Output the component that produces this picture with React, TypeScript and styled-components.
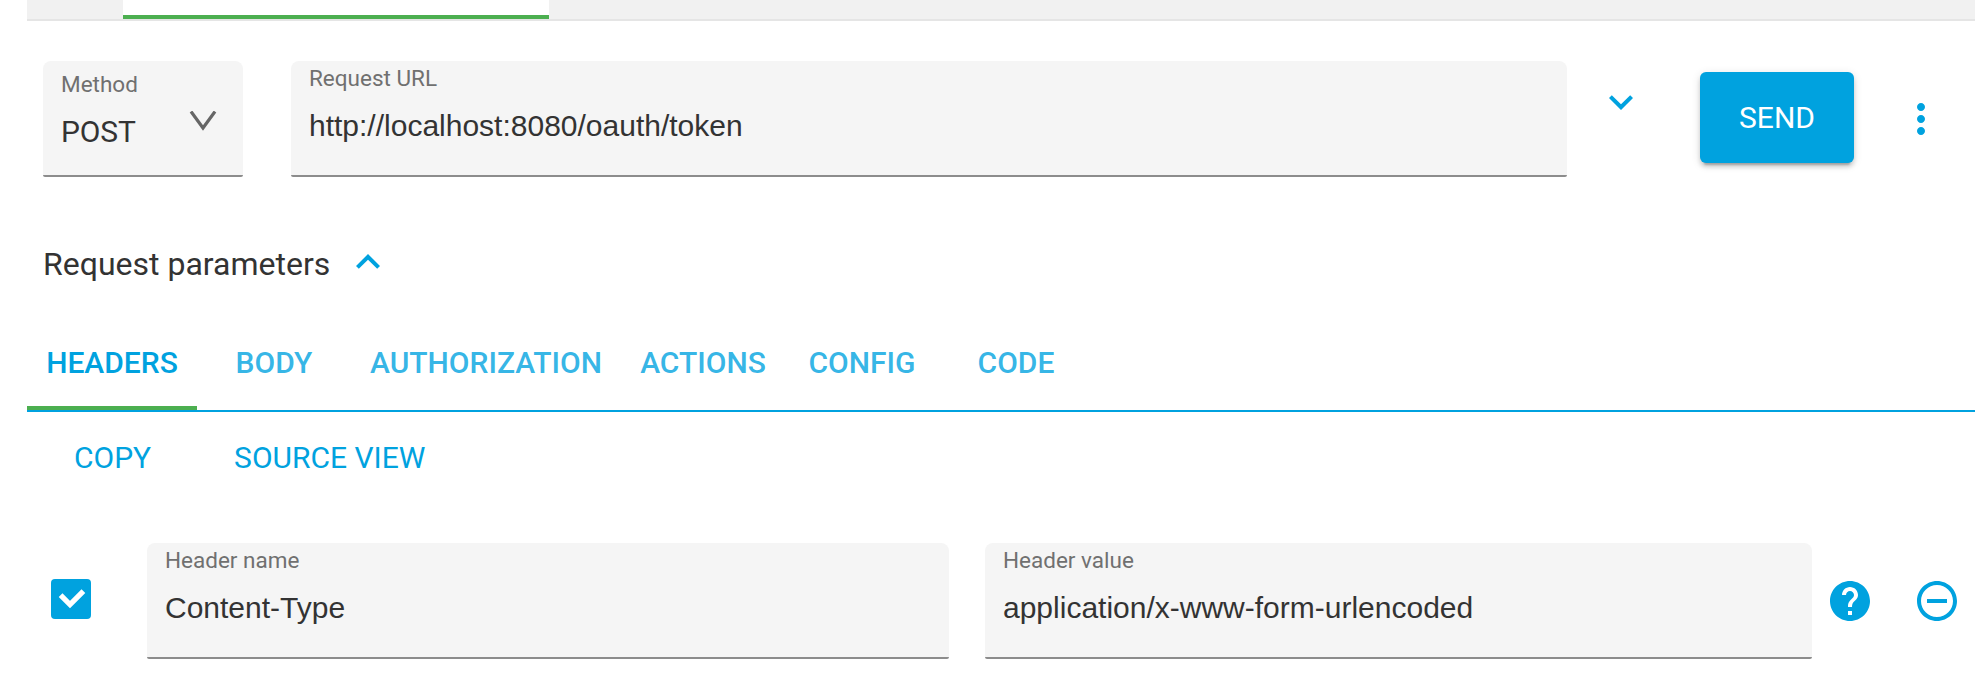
import React from "react";
import styled, { createGlobalStyle } from "styled-components";

const BLUE = "#00a2df";
const GREEN = "#4caf50";

const GlobalStyle = createGlobalStyle`
  * { box-sizing: border-box; }
  html, body { margin: 0; background: #fff; }
  body { font-family: Roboto, "Liberation Sans", sans-serif; color: #333; font-size: 30px; }
  button { font: inherit; border: 0; background: none; padding: 0; margin: 0; }
`;

const Page = styled.main`
  width: 1986px;
  height: 696px;
  padding: 0 11px 0 27px;
  display: flex;
  flex-direction: column;
  overflow: hidden;
`;

const WorkspaceTabs = styled.div`
  flex: none;
  height: 21px;
  padding-left: 96px;
  background: #f1f1f1;
  border-bottom: 2px solid #e5e5e5;
`;

const WorkspaceTab = styled.div`
  width: 426px;
  height: 19px;
  background: #fff;
  border-bottom: 4px solid ${GREEN};
`;

const RequestRow = styled.div`
  display: flex;
  align-items: flex-start;
  height: 116px;
  margin: 40px 0 0 16px;
`;

const Field = styled.div<{ $width: number; $top?: number }>`
  display: flex;
  flex: none;
  flex-direction: column;
  width: ${(p) => p.$width}px;
  height: 116px;
  padding: ${(p) => p.$top ?? 3}px 18px 0;
  background: #f5f5f5;
  border-radius: 8px 8px 2px 2px;
  border-bottom: 2px solid #8c8c8c;
`;

const FieldLabel = styled.span`
  font-size: 22.5px;
  line-height: 28px;
  color: #707070;
`;

const FieldValue = styled.span`
  margin-top: 16px;
  font-family: "Liberation Sans", Arial, sans-serif;
  font-size: 30px;
  line-height: 36px;
  white-space: nowrap;
`;

const SelectValue = styled.div`
  display: flex;
  align-items: center;
  justify-content: space-between;
  margin-top: 16px;
  padding-right: 8px;
  font-size: 30px;
  line-height: 36px;
  letter-spacing: -0.15px;
`;

const SelectArrow = styled.svg`
  width: 28px;
  height: 20px;
  margin-top: -23px;
`;

const UrlField = styled(Field)`
  margin-left: 48px;
`;

const IconButton = styled.button<{ $left: number; $top: number }>`
  flex: none;
  display: flex;
  width: 48px;
  height: 48px;
  margin: ${(p) => p.$top}px 0 0 ${(p) => p.$left}px;
  color: ${BLUE};

  svg { width: 48px; height: 48px; fill: currentColor; }
`;

const SendButton = styled.button`
  width: 154px;
  height: 91px;
  margin: 11px 0 0 55px;
  border-radius: 6px;
  background: ${BLUE};
  color: #fff;
  font-size: 30px;
  box-shadow: 0 4px 4px rgba(0, 0, 0, 0.14), 0 2px 10px rgba(0, 0, 0, 0.12), 0 6px 2px -4px rgba(0, 0, 0, 0.2);
`;

const SectionTitle = styled.div`
  display: flex;
  height: 48px;
  margin: 61px 0 0 16px;
  font-size: 32px;
  line-height: 52px;
`;

const Tabs = styled.div`
  display: flex;
  height: 92px;
  margin-top: 34px;
  border-bottom: 2px solid ${BLUE};
`;

const Tab = styled.button<{ $width: number; $active?: boolean }>`
  width: ${(p) => p.$width}px;
  height: 90px;
  padding-bottom: 2px;
  border-bottom: 4px solid ${(p) => (p.$active ? GREEN : "transparent")};
  color: ${(p) => (p.$active ? BLUE : "rgba(0, 162, 223, 0.8)")};
  font-weight: 500;
  white-space: nowrap;
`;

const Actions = styled.div`
  display: flex;
  gap: 83px;
  margin: 28px 0 0 47px;
  height: 36px;
`;

const TextButton = styled.button`
  color: ${BLUE};
  line-height: 36px;
`;

const HeaderRow = styled.div`
  display: flex;
  align-items: flex-start;
  margin: 67px 0 0 24px;
`;

const Checkbox = styled.button`
  display: flex;
  width: 40px;
  height: 40px;
  margin: 36px 56px 0 0;
  border-radius: 4px;
  background: ${BLUE};
`;

const ValueField = styled(Field)`
  margin-left: 36px;
`;

const tabs = [
  { label: "HEADERS", width: 170 },
  { label: "BODY", width: 154 },
  { label: "AUTHORIZATION", width: 270 },
  { label: "ACTIONS", width: 164 },
  { label: "CONFIG", width: 154 },
  { label: "CODE", width: 154 },
];

const Icon = ({ d }: { d: string }) => (
  <svg viewBox="0 0 24 24" aria-hidden="true">
    <path d={d} />
  </svg>
);

export default function App() {
  return (
    <>
      <GlobalStyle />
      <Page>
        <WorkspaceTabs>
          <WorkspaceTab />
        </WorkspaceTabs>

        <RequestRow>
          <Field $width={200} $top={9}>
            <FieldLabel>Method</FieldLabel>
            <SelectValue>
              POST
              <SelectArrow viewBox="0 0 28 20">
                <path d="M2 0.5 14 17 26 0.5" fill="none" stroke="#666" strokeWidth="3.2" />
              </SelectArrow>
            </SelectValue>
          </Field>
          <UrlField $width={1276}>
            <FieldLabel>Request URL</FieldLabel>
            <FieldValue>http://localhost:8080/oauth/token</FieldValue>
          </UrlField>
          <IconButton $left={30} $top={17} aria-label="Show URL details">
            <Icon d="M16.59 8.59L12 13.17 7.41 8.59 6 10l6 6 6-6z" />
          </IconButton>
          <SendButton>SEND</SendButton>
          <IconButton $left={43} $top={34} aria-label="More options">
            <Icon d="M12 8c1.1 0 2-.9 2-2s-.9-2-2-2-2 .9-2 2 .9 2 2 2zm0 2c-1.1 0-2 .9-2 2s.9 2 2 2 2-.9 2-2-.9-2-2-2zm0 6c-1.1 0-2 .9-2 2s.9 2 2 2 2-.9 2-2-.9-2-2-2z" />
          </IconButton>
        </RequestRow>

        <SectionTitle>
          Request parameters
          <IconButton $left={14} $top={0} aria-label="Collapse parameters">
            <Icon d="M12 8l-6 6 1.41 1.41L12 10.83l4.59 4.58L18 14z" />
          </IconButton>
        </SectionTitle>

        <Tabs>
          {tabs.map((tab, i) => (
            <Tab key={tab.label} $width={tab.width} $active={i === 0}>
              {tab.label}
            </Tab>
          ))}
        </Tabs>

        <Actions>
          <TextButton>COPY</TextButton>
          <TextButton>SOURCE VIEW</TextButton>
        </Actions>

        <HeaderRow>
          <Checkbox aria-label="Header enabled">
            <svg width="40" height="40" viewBox="0 0 40 40">
              <path d="M9.6 16.2 19 25.6 32.4 12.2" fill="none" stroke="#fff" strokeWidth="5.3" />
            </svg>
          </Checkbox>
          <Field $width={802}>
            <FieldLabel>Header name</FieldLabel>
            <FieldValue>Content-Type</FieldValue>
          </Field>
          <ValueField $width={827}>
            <FieldLabel>Header value</FieldLabel>
            <FieldValue>application/x-www-form-urlencoded</FieldValue>
          </ValueField>
          <IconButton $left={14} $top={34} aria-label="Header help">
            <Icon d="M12 2C6.48 2 2 6.48 2 12s4.48 10 10 10 10-4.48 10-10S17.52 2 12 2zm1 17h-2v-2h2v2zm2.07-7.75l-.9.92C13.45 12.9 13 13.5 13 15h-2v-.5c0-1.1.45-2.1 1.17-2.83l1.24-1.26c.37-.36.59-.86.59-1.41 0-1.1-.9-2-2-2s-2 .9-2 2H8c0-2.21 1.79-4 4-4s4 1.79 4 4c0 .88-.36 1.68-.93 2.25z" />
          </IconButton>
          <IconButton $left={39} $top={34} aria-label="Remove header">
            <Icon d="M7 11v2h10v-2H7zm5-9C6.48 2 2 6.48 2 12s4.48 10 10 10 10-4.48 10-10S17.52 2 12 2zm0 18c-4.41 0-8-3.59-8-8s3.59-8 8-8 8 3.59 8 8-3.59 8-8 8z" />
          </IconButton>
        </HeaderRow>
      </Page>
    </>
  );
}
